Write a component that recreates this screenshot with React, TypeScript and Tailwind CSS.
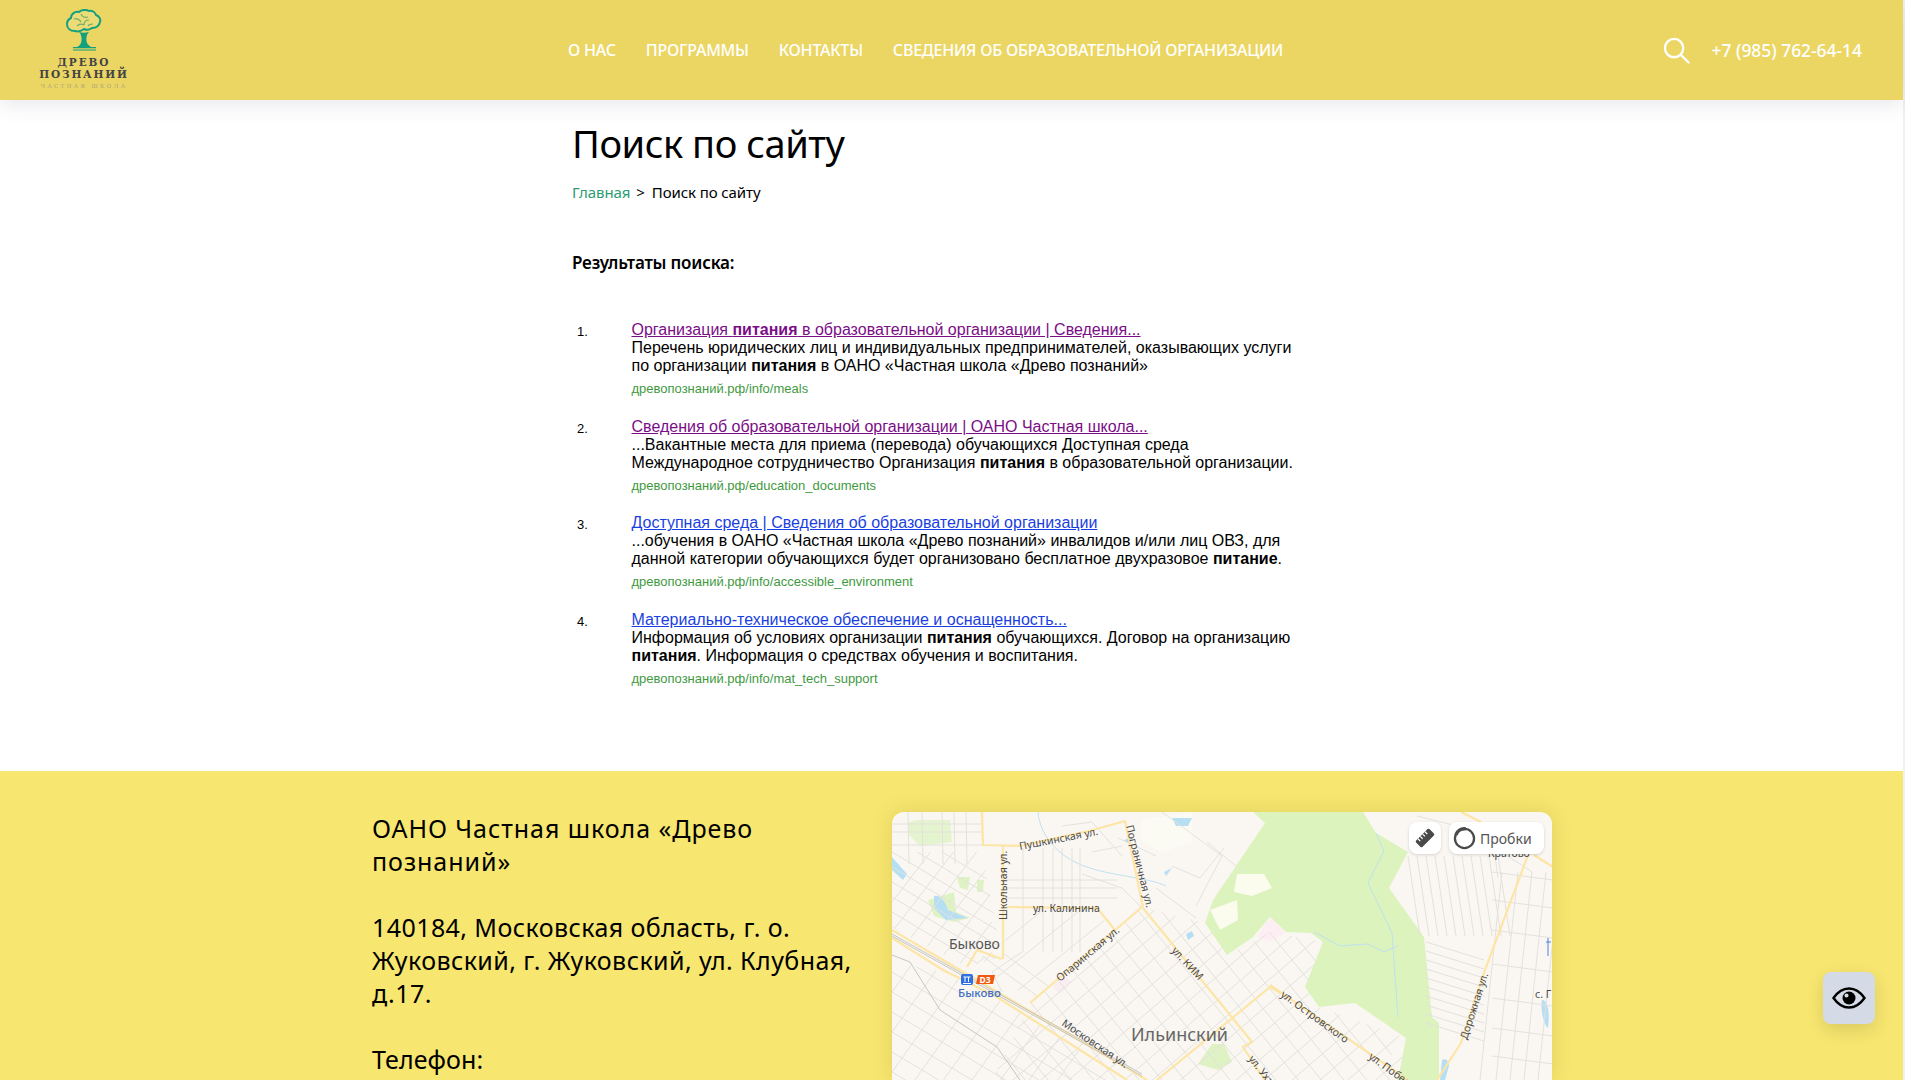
const navItems = ['О НАС', 'ПРОГРАММЫ', 'КОНТАКТЫ', 'СВЕДЕНИЯ ОБ ОБРАЗОВАТЕЛЬНОЙ ОРГАНИЗАЦИИ']

const range = (from: number, to: number, step: number) => {
  const out: number[] = []
  for (let v = from; v <= to; v += step) out.push(v)
  return out
}

function Logo() {
  return (
    <div className="flex flex-col items-center w-[92px] font-['DejaVu_Serif',serif] font-bold text-[#444] leading-none">
      <svg width="36" height="42" viewBox="0 0 36 42" className="mb-[6px]">
        <path d="M9 22c-5 0-8-3-8-7 0-3 2-5 4-6 0-4 4-7 8-6 2-2 7-3 10-1 3-1 6 1 7 4 3 1 5 4 4 7-1 4-4 6-8 6-3 2-6 2-8 1-3 2-6 3-9 2z" fill="#ebdc78" stroke="#12a07e" strokeWidth="2" />
        <path d="M8 10c3-1 6 1 7 3M15 5c1 3 4 4 7 3M23 11c-3 0-5 2-5 5M11 17c2-2 5-2 7-1M27 15c-2 0-4 0-5 2" fill="none" stroke="#6fae6a" strokeWidth="1.2" />
        <path d="M13 23c3 1 6 1 10 0-3 3-3 8-2 11 1 2 3 3 4 4H11c2-1 3-2 4-4 1-3 1-8-2-11z" fill="#12a07e" />
        <path d="M7 38h23v1.200H7zM7 40.400h23v1H7z" fill="#12a07e" />
      </svg>
      <span className="text-[10.5px] tracking-[1.9px]">ДРЕВО</span>
      <span className="text-[10.5px] tracking-[1.8px] mt-[2px]">ПОЗНАНИЙ</span>
      <span className="text-[5.5px] tracking-[2.4px] mt-[4px] text-[#aca57c] font-normal whitespace-nowrap">ЧАСТНАЯ ШКОЛА</span>
    </div>
  )
}

function Header() {
  return (
    <header className="relative z-10 h-[100px] shrink-0 bg-[#ebd664] flex items-center shadow-[0_4px_20px_rgba(60,60,90,0.12)] text-white font-['Noto_Sans',sans-serif]">
      <div className="w-[568px] shrink-0 pl-[38px] pb-[2px]">
        <Logo />
      </div>
      <nav className="flex gap-[30px] text-[16px] font-medium tracking-[-0.22px]">
        {navItems.map((item) => (
          <a key={item} className="whitespace-nowrap">{item}</a>
        ))}
      </nav>
      <svg width="27" height="27" viewBox="0 0 28 28" fill="none" stroke="#fff" strokeWidth="2.4" strokeLinecap="round" className="ml-auto">
        <circle cx="11.5" cy="11.5" r="9.5" />
        <path d="M18.500 18.500 26.500 26.500" />
      </svg>
      <span className="ml-[22px] mr-[41px] text-[17.4px] font-medium whitespace-nowrap">+7 (985) 762-64-14</span>
    </header>
  )
}

type Result = { title: React.ReactNode; text: React.ReactNode; url: string; visited: boolean }

const results: Result[] = [
  {
    title: <>Организация <b>питания</b> в образовательной организации | Сведения...</>,
    text: <>Перечень юридических лиц и индивидуальных предпринимателей, оказывающих услуги<br />по организации <b>питания</b> в ОАНО «Частная школа «Древо познаний»</>,
    url: 'древопознаний.рф/info/meals',
    visited: true,
  },
  {
    title: <>Сведения об образовательной организации | ОАНО Частная школа...</>,
    text: <>...Вакантные места для приема (перевода) обучающихся Доступная среда<br />Международное сотрудничество Организация <b>питания</b> в образовательной организации.</>,
    url: 'древопознаний.рф/education_documents',
    visited: true,
  },
  {
    title: <>Доступная среда | Сведения об образовательной организации</>,
    text: <>...обучения в ОАНО «Частная школа «Древо познаний» инвалидов и/или лиц ОВЗ, для<br />данной категории обучающихся будет организовано бесплатное двухразовое <b>питание</b>.</>,
    url: 'древопознаний.рф/info/accessible_environment',
    visited: false,
  },
  {
    title: <>Материально-техническое обеспечение и оснащенность...</>,
    text: <>Информация об условиях организации <b>питания</b> обучающихся. Договор на организацию<br /><b>питания</b>. Информация о средствах обучения и воспитания.</>,
    url: 'древопознаний.рф/info/mat_tech_support',
    visited: false,
  },
]

function SearchResults() {
  return (
    <ol className="mt-[47px] flex flex-col gap-[21.7px] font-['Liberation_Sans',Arial,sans-serif] text-[16px] leading-[18px] text-black">
      {results.map((r, i) => (
        <li key={r.url} className="flex">
          <span className="w-[59.500px] pl-[5px] pt-[2px] text-[13px] shrink-0">{i + 1}.</span>
          <div className="whitespace-nowrap">
            <a className={r.visited ? 'underline text-[#7b0d87]' : 'underline text-[#1a3fe0]'}>{r.title}</a>
            <div>{r.text}</div>
            <div className="mt-[6px] text-[13px] leading-[15px] text-[#3f9a3f]">{r.url}</div>
          </div>
        </li>
      ))}
    </ol>
  )
}

function MapDrawing() {
  const label = "fill-[#4a4a4a] text-[10.5px] font-['Noto_Sans',sans-serif]"
  return (
    <svg viewBox="0 0 661 268" width="661" height="268" className="block">
      <defs>
        <clipPath id="zoneEast"><polygon points="138,191 250,95 313,111 335,143 378,120 431,130 413,175 427,195 514,226 506,268 100,268" /></clipPath>
        <clipPath id="zoneSouth"><polygon points="0,150 51,160 105,187 235,268 0,268" /></clipPath>
        <clipPath id="zoneWest"><polygon points="0,40 90,40 110,145 75,155 0,115" /></clipPath>
        <clipPath id="zoneCenter"><polygon points="115,100 205,100 222,120 140,188 70,140 112,148" /></clipPath>
      </defs>
      <rect width="661" height="268" fill="#faf7f2" />

      {/* forest and parks */}
      <polygon points="361,0 373,11 346,51 321,88 313,111 335,143 361,125 378,105 394,120 419,121 431,130 413,175 427,195 463,191 514,226 506,268 547,268 547,211 540,205 532,125 497,76 516,40 484,21 471,0" fill="#dcf3bd" />
      <polygon points="17,10 26,8 58,8 60,30 28,34 16,22" fill="#dff2c4" opacity="0.8" />
      <polygon points="65,65 78,65 76,78 68,76" fill="#dff2c4" />
      <polygon points="85,68 92,68 91,80 85,80" fill="#dff2c4" />
      <polygon points="36,88 62,80 64,100 78,106 62,110 42,104" fill="#dff2c4" />
      <polygon points="318,98 345,88 346,108 328,118" fill="#fbfbee" />
      <polygon points="345,62 372,62 380,76 360,84 342,80" fill="#fbfbee" />
      <polygon points="250,8 300,0 300,30 270,40 250,30" fill="#fbfbf4" />
      <polygon points="378,105 394,120 378,130 365,124" fill="#fdeef4" />
      <polygon points="160,174 172,164 180,170 168,182" fill="#fbeef2" />
      <polygon points="320,232 332,232 340,250 326,258 306,252" fill="#dff2c4" />

      {/* water */}
      <path d="M42 84c6-2 12 6 14 14l20 8-22 2-12-12z" fill="#b6dff4" />
      <path d="M0 45 15 62l-4 6L0 58z" fill="#b6dff4" />
      <path d="M280 6h20l-4 8h-12zM232 28l8-3-2 8zM272 60l8-4-6 8zM294 122l6-3 2 5-6 4zM650 188c6 0 8 12 6 28-4-2-8-20-6-28zM550 248c3-2 7 0 7 6l-4 14h-5z" fill="#b6dff4" />
      <path d="M146 0c2 26 24 48 52 56 24 8 60 10 76 18" fill="none" stroke="#bfe0ef" strokeWidth="1" />
      <path d="M422 120l26 14 28-2 16 8 14-6" fill="none" stroke="#bfe0ef" strokeWidth="1" />
      <path d="M484 21l8 18-16 32 24 50 6 84" fill="none" stroke="#bfe0ef" strokeWidth="1" />

      {/* small streets */}
      <g stroke="#e3e1dc" strokeWidth="1" fill="none">
        <g clipPath="url(#zoneEast)">
          {range(60, 900, 24).map((c) => <line key={`a${c}`} x1={0} y1={c} x2={600} y2={c - 516} />)}
          {range(-400, 300, 28).map((c) => <line key={`b${c}`} x1={0} y1={c} x2={500} y2={c + 615} />)}
        </g>
        <g clipPath="url(#zoneSouth)">
          {range(120, 420, 20).map((c) => <line key={`c${c}`} x1={0} y1={c} x2={300} y2={c + 180} />)}
          {range(100, 520, 40).map((c) => <line key={`d${c}`} x1={0} y1={c} x2={200} y2={c - 280} />)}
        </g>
        <g clipPath="url(#zoneWest)">
          {range(10, 140, 15).map((c) => <line key={`e${c}`} x1={0} y1={c} x2={130} y2={c + 78} />)}
          {range(90, 320, 30).map((c) => <line key={`f${c}`} x1={0} y1={c} x2={100} y2={c - 130} />)}
        </g>
        <g clipPath="url(#zoneCenter)">
          {range(60, 340, 18).map((c) => <line key={`g${c}`} x1={0} y1={c} x2={260} y2={c + 190} />)}
          {range(100, 400, 30).map((c) => <line key={`h${c}`} x1={0} y1={c} x2={260} y2={c - 210} />)}
        </g>
        {[16, 30, 50, 62, 74].map((x) => <line key={x} x1={x} y1={0} x2={x + 1} y2={52} />)}
        {[12, 20, 33].map((y) => <line key={y} x1={0} y1={y} x2={90} y2={y} />)}
        {[131, 151, 161, 170, 180, 188].map((x) => <line key={x} x1={x} y1={36} x2={x} y2={140} />)}
        {[68, 76, 86].map((y) => <line key={y} x1={113} y1={y} x2={225} y2={y} />)}
        <path d="M130 140 100 160 110 180M190 62l40 14 20 20M170 14l30-4 30 34M200 40l30-6M226 26l38 18M270 0l60 44-26 50M332 36l-24 30-28-12M264 76l40 30M315 30l36 30" />
        {range(516, 612, 9).map((x) => <line key={x} x1={x} y1={44} x2={x + 12} y2={124} />)}
        {range(130, 214, 9).map((y) => <line key={y} x1={534} y1={y} x2={592} y2={y + 18} />)}
        {[596, 612, 626, 640, 654].map((x) => <line key={x} x1={x + 14} y1={60} x2={x - 8} y2={268} />)}
        {[60, 88, 118, 152, 186, 216, 244].map((y) => <line key={y} x1={600} y1={y} x2={661} y2={y + 8} />)}
        <path d="M570 14 640 60M525 4l40 10M600 22l6 44" />
      </g>

      {/* main roads */}
      <g stroke="#fde5a6" strokeWidth="2.2" fill="none" strokeLinejoin="round">
        <polyline points="90,0 91,33 128,34 201,18 233,9 251,95" />
        <line x1="111" y1="34" x2="111" y2="147" />
        <polyline points="114,95 205,96 223,118" />
        <line x1="138" y1="191" x2="250" y2="95" />
        <polyline points="251,96 360,230 351,235 373,268" />
        <polyline points="0,118 255,268" />
        <polyline points="0,126 51,158 105,185 235,268" />
        <polyline points="265,268 378,175 388,181" />
        <polyline points="75,155 85,138 110,147" />
        <polyline points="378,173 516,268" />
        <polyline points="636,43 593,158 569,231 545,268" />
        <polyline points="569,0 589,10" />
        <polyline points="642,43 661,55" />
      </g>

      {/* railway */}
      <g fill="none" stroke="#c6c5c1" strokeWidth="1">
        <line x1="0" y1="122" x2="250" y2="262" />
        <line x1="0" y1="124" x2="250" y2="264" />
        <polyline points="0,143 18,150 48,198 105,235 128,268" />
      </g>

      {/* labels */}
      <text x="128" y="38" transform="rotate(-11 128 38)" className={label}>Пушкинская ул.</text>
      <text x="234" y="14" transform="rotate(76 234 14)" className={label}>Пограничная ул.</text>
      <text x="115" y="108" transform="rotate(-90 115 108)" className={label}>Школьная ул.</text>
      <text x="141" y="100" className={label}>ул. Калинина</text>
      <text x="168" y="170" transform="rotate(-40 168 170)" className={label}>Опаринская ул.</text>
      <text x="279" y="139" transform="rotate(47 279 139)" className={label}>ул. КИМ</text>
      <text x="169" y="213" transform="rotate(34 169 213)" className={label}>Московская ул.</text>
      <text x="356" y="247" transform="rotate(52 356 247)" className={label}>ул. Ухтомская</text>
      <text x="388" y="184" transform="rotate(36 388 184)" className={label}>ул. Островского</text>
      <text x="476" y="246" transform="rotate(36 476 246)" className={label}>ул. Победы</text>
      <text x="575" y="228" transform="rotate(-72 575 228)" className={label}>Дорожная ул.</text>
      <text x="643" y="186" className={label}>с. Г</text>
      <text x="596" y="45" className={label}>Кратово</text>
      <text x="57" y="137" className="fill-[#555] text-[14px] font-['Noto_Sans',sans-serif]">Быково</text>
      <text x="239" y="229" className="fill-[#666] text-[18px] font-['Noto_Sans',sans-serif]">Ильинский</text>
      <text x="66" y="185" className="fill-[#3f6dc2] text-[11.5px] font-medium font-['Noto_Sans',sans-serif]">Быково</text>

      {/* station marks */}
      <rect x="69" y="162" width="12" height="11" rx="2" fill="#2f6fe0" />
      <path d="M71.500 165h7M73 165v5M76.500 165v5M71 171.500h8" stroke="#fff" strokeWidth="1" fill="none" />
      <polygon points="86,163 103,163 101,172 84,172" fill="#f0590f" />
      <text x="87.500" y="171" className="fill-white text-[8.5px] font-bold font-['Noto_Sans',sans-serif]">D3</text>
      <path d="M656 126v10M654 130h5M656 136v8" stroke="#4d82d8" strokeWidth="1" fill="none" />
    </svg>
  )
}

function MapBlock() {
  return (
    <div className="relative w-[660px] h-[268px] overflow-hidden rounded-t-[12px] shadow-[0_0_20px_rgba(120,110,40,0.18)]">
      <MapDrawing />
      <div className="absolute top-[10px] right-[8px] flex gap-[8px] font-['Noto_Sans',sans-serif]">
        <div className="w-[32px] h-[32px] rounded-[8px] bg-white shadow-[0_1px_3px_rgba(0,0,0,0.15)] flex items-center justify-center">
          <svg width="20" height="20" viewBox="0 0 18 18">
            <g transform="rotate(-45 9 9)">
              <rect x="0.5" y="5" width="17" height="8" rx="1.2" fill="#4a4a4a" />
              <path d="M4 5v3M7 5v3M10 5v3M13 5v3" stroke="#fff" strokeWidth="1.1" />
            </g>
          </svg>
        </div>
        <div className="w-[95px] h-[32px] rounded-[8px] bg-white shadow-[0_1px_3px_rgba(0,0,0,0.15)] flex items-center pl-[4px] gap-[4px] text-[14px] text-[#555]">
          <svg width="23" height="23" viewBox="0 0 20 20" fill="none">
            <circle cx="10" cy="10" r="8.3" stroke="#4a4a4a" strokeWidth="2" />
            <path d="M2.500 7C3.500 3.500 7 1.200 11 1.500" stroke="#4a4a4a" strokeWidth="3" />
          </svg>
          <span>Пробки</span>
        </div>
      </div>
    </div>
  )
}

export default function App() {
  return (
    <div className="relative h-screen overflow-hidden flex bg-[#f1f1f1]">
      <div className="flex-1 min-w-0 flex flex-col bg-white">
        <Header />
        <main className="h-[671px] shrink-0 pl-[572px] pt-[16px] text-black font-['Noto_Sans',sans-serif]">
          <h1 className="text-[38px] leading-[54px] font-normal tracking-[-0.45px]">Поиск по сайту</h1>
          <div className="mt-[12px] text-[15px] leading-[20px] flex gap-[6px] tracking-[-0.1px]">
            <a className="text-[#2a9d72]">Главная</a>
            <span>&gt;</span>
            <span className="ml-[1px]">Поиск по сайту</span>
          </div>
          <p className="mt-[50px] text-[17px] leading-[22px] font-semibold tracking-[-0.2px]">Результаты поиска:</p>
          <SearchResults />
        </main>
        <footer className="flex-1 bg-[#f7e66f] flex pl-[372px] pt-[41px]">
          <div className="w-[520px] shrink-0 text-[25px] leading-[33px] text-black font-['Noto_Sans',sans-serif]">
            <p className="tracking-[0.95px]">ОАНО Частная школа «Древо<br />познаний»</p>
            <p className="mt-[33px] tracking-[0.42px]">140184, Московская область, г. о.<br />Жуковский, г. Жуковский, ул. Клубная,<br />д.17.</p>
            <p className="mt-[33px] tracking-[0.1px]">Телефон:</p>
          </div>
          <MapBlock />
        </footer>
      </div>
      <div className="w-[2px] shrink-0" />
      <button className="absolute right-[30px] bottom-[56px] w-[52px] h-[52px] rounded-[8px] bg-[#d5dbe6] shadow-[0_6px_18px_rgba(0,0,0,0.12)] flex items-center justify-center">
        <svg width="34" height="22" viewBox="0 0 34 22">
          <path d="M1.500 11C6 4.500 11 1.500 17 1.500S28 4.500 32.500 11C28 17.500 23 20.500 17 20.500S6 17.500 1.500 11z" fill="none" stroke="#000" strokeWidth="2.4" />
          <circle cx="17" cy="11" r="6.500" fill="#000" />
          <circle cx="14.500" cy="8.500" r="2" fill="#d5dbe6" />
        </svg>
      </button>
    </div>
  )
}
